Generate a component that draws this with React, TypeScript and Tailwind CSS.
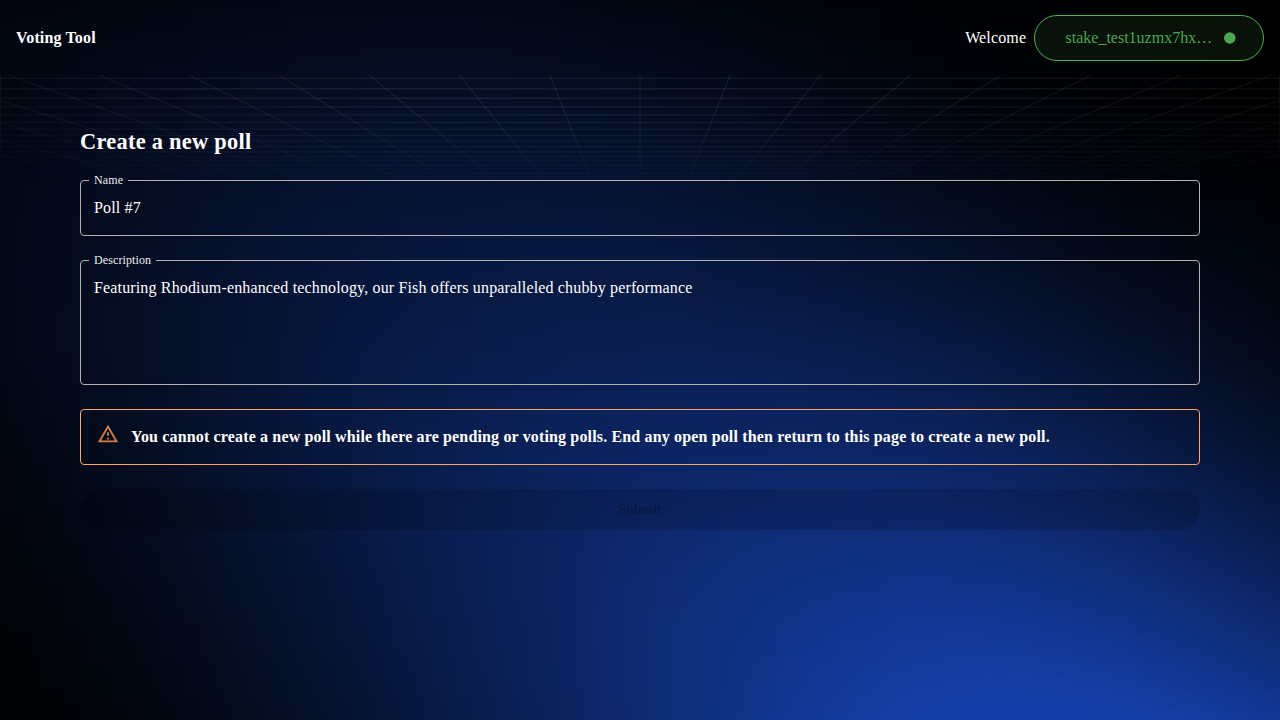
import React from "react";

const COLUMNS = Array.from({ length: 41 }, (_, i) => i - 20);
const ROWS = Array.from({ length: 30 }, (_, k) => 300.6 - 1 / (0.004498 + 0.000222 * k));

/* Blue intensity of the backdrop, sampled every 160px across and 120px down. */
const GLOW = [
  [13, 17, 21, 21, 17, 10, 4, 1, 0],
  [19, 30, 38, 42, 36, 25, 12, 4, 0],
  [22, 38, 54, 62, 62, 51, 37, 20, 11],
  [21, 40, 62, 77, 84, 82, 69, 46, 23],
  [14, 34, 62, 86, 104, 109, 106, 86, 54],
  [8, 25, 53, 85, 116, 138, 147, 132, 101],
  [2, 15, 42, 76, 113, 150, 174, 173, 148],
];

function extend(values: number[]) {
  const n = values.length;
  const first = Math.max(0, 2 * values[0] - values[1]);
  const last = Math.max(0, 2 * values[n - 1] - values[n - 2]);
  return [first, first, ...values, last, last];
}

function glowCells() {
  const wide = GLOW.map(extend);
  const columns = wide[0].map((_, x) => extend(wide.map((row) => row[x])));
  return columns.flatMap((column, x) =>
    column.map((b, y) => ({
      x: (x - 2) * 160 - 80,
      y: (y - 2) * 120 - 60,
      fill: `rgb(${Math.round(b * 0.12)},${Math.round(b * 0.37)},${Math.round(b)})`,
    })),
  );
}

function Backdrop() {
  return (
    <svg className="pointer-events-none absolute inset-0 size-full" viewBox="0 0 1280 720" preserveAspectRatio="none">
      <filter
        id="soften"
        x="-400"
        y="-300"
        width="2080"
        height="1320"
        filterUnits="userSpaceOnUse"
        colorInterpolationFilters="sRGB"
      >
        <feGaussianBlur stdDeviation="70 56" />
      </filter>
      <g filter="url(#soften)" shapeRendering="crispEdges">
        {glowCells().map((c) => (
          <rect key={`${c.x},${c.y}`} x={c.x} y={c.y} width="160" height="120" fill={c.fill} />
        ))}
      </g>
    </svg>
  );
}

function Grid() {
  return (
    <svg
      className="pointer-events-none absolute left-0 top-[75px] h-[145px] w-full [mask-image:radial-gradient(ellipse_1200px_124px_at_50%_0%,#000_0%,#000_30%,transparent_100%)]"
      viewBox="0 75 1280 145"
      preserveAspectRatio="none"
      fill="none"
      stroke="#ffffff"
      strokeOpacity="0.07"
    >
      {COLUMNS.map((c) => (
        <line key={c} x1={640 + c * 90.3} y1={75} x2={640 + c * 90.3 * (1 - 145 / 224)} y2={220} strokeWidth="1.3" />
      ))}
      {ROWS.map((y) => (
        <line key={y} x1={0} y1={y} x2={1280} y2={y} strokeWidth="1.3" />
      ))}
      <path d="M.5 75V220M1279.5 75V220" />
    </svg>
  );
}

function WarningIcon() {
  return (
    <svg className="mb-[7px] size-[22px] shrink-0 text-[#d67c3e]" viewBox="0 0 24 24" fill="currentColor">
      <path d="M12 5.99L19.53 19H4.47L12 5.99M12 2L1 21h22L12 2zm1 14h-2v2h2v-2zm0-6h-2v4h2v-4z" />
    </svg>
  );
}

function Field({ label, height, children }: { label: string; height: string; children: React.ReactNode }) {
  return (
    <fieldset className={`-mt-1.5 rounded border border-[#b5b2ae] px-2 ${height}`}>
      <legend className="px-[5px] text-xs leading-[13px] tracking-[0.11px] text-[#ededed]">{label}</legend>
      <div className="px-[5px] pt-[9px] text-base leading-[23px] tracking-[0.15px]">{children}</div>
    </fieldset>
  );
}

export default function App() {
  return (
    <div className="relative h-[720px] w-full overflow-hidden bg-black text-white [font-family:'Liberation_Serif',serif]">
      <Backdrop />
      <Grid />
      <div className="relative flex h-full flex-col">
        <header className="flex h-[75px] shrink-0 items-center justify-between px-4 pt-px">
          <div className="text-base font-bold tracking-[0.15px]">Voting Tool</div>
          <div className="flex items-center gap-[7.8px] text-base tracking-[0.15px]">
            <span>Welcome</span>
            <div className="flex h-[46px] w-[230px] items-center rounded-full border border-[#4caf50] bg-[#4caf50]/10 pl-[30.5px] text-[#4ba64f]">
              <span className="w-[147px] whitespace-nowrap tracking-normal">stake_test1uzmx7hx…</span>
              <svg className="ml-[11.5px] size-3" viewBox="0 0 12 12">
                <circle cx="5.8" cy="6" r="5.8" fill="currentColor" />
              </svg>
            </div>
          </div>
        </header>
        <main className="flex flex-col px-20 pt-[51px]">
          <h1 className="text-[22.4px] font-bold leading-[32px] tracking-[0.27px]">Create a new poll</h1>
          <div className="mt-[22px] flex flex-col gap-6">
            <Field label="Name" height="h-[62px]">Poll #7</Field>
            <Field label="Description" height="h-[131px]">
              Featuring Rhodium-enhanced technology, our Fish offers unparalleled chubby performance
            </Field>
            <div className="flex h-14 items-center rounded border border-[#ffa766] px-4">
              <WarningIcon />
              <span className="ml-3 text-base font-bold tracking-[0.15px]">
                You cannot create a new poll while there are pending or voting polls. End any open poll then return to this page to create a new poll.
              </span>
            </div>
            <button disabled className="h-[41px] rounded-full bg-black/[0.14] text-sm font-bold text-black/[0.26]">
              Submit
            </button>
          </div>
        </main>
      </div>
    </div>
  );
}
